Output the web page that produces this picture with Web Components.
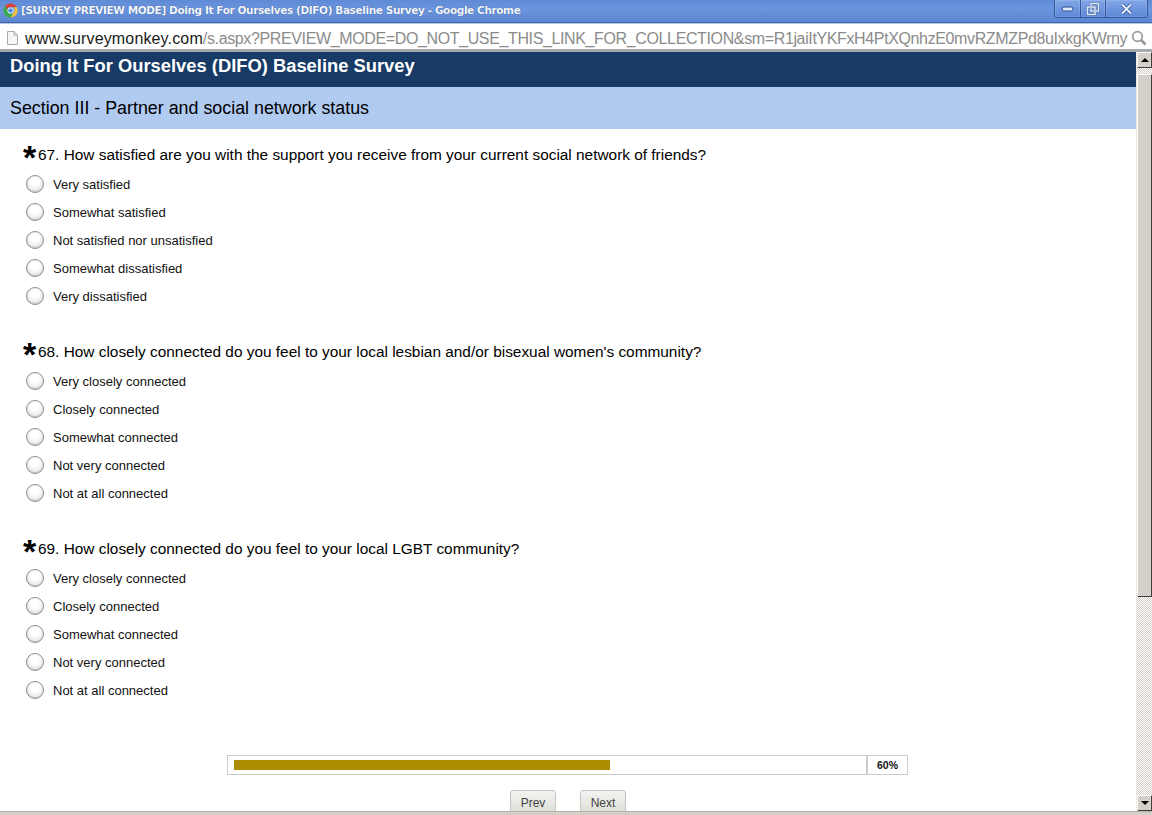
<!DOCTYPE html>
<html>
<head>
<meta charset="utf-8">
<title>DIFO Baseline Survey</title>
<style>
  html, body { margin: 0; padding: 0; height: 815px; overflow: hidden; background: #fff; }
  body { font-family: "Liberation Sans", Arial, sans-serif; }
  #app { display: flex; flex-direction: column; height: 815px; }
  #page { display: flex; height: 759px; }
  #content { flex: 1; min-width: 0; overflow: hidden; }
</style>
</head>
<body>
<div id="app">
  <title-bar>[SURVEY PREVIEW MODE] Doing It For Ourselves (DIFO) Baseline Survey - Google Chrome</title-bar>
  <address-bar host-name="www.surveymonkey.com" path="/s.aspx?PREVIEW_MODE=DO_NOT_USE_THIS_LINK_FOR_COLLECTION&amp;sm=R1jaiItYKFxH4PtXQnhzE0mvRZMZPd8uIxkgKWrny"></address-bar>
  <div id="page">
    <div id="content">
      <survey-header title="Doing It For Ourselves (DIFO) Baseline Survey" section="Section III - Partner and social network status"></survey-header>
      <survey-question number="67" text="How satisfied are you with the support you receive from your current social network of friends?">
        <survey-radio>Very satisfied</survey-radio>
        <survey-radio>Somewhat satisfied</survey-radio>
        <survey-radio>Not satisfied nor unsatisfied</survey-radio>
        <survey-radio>Somewhat dissatisfied</survey-radio>
        <survey-radio>Very dissatisfied</survey-radio>
      </survey-question>
      <survey-question number="68" text="How closely connected do you feel to your local lesbian and/or bisexual women's community?">
        <survey-radio>Very closely connected</survey-radio>
        <survey-radio>Closely connected</survey-radio>
        <survey-radio>Somewhat connected</survey-radio>
        <survey-radio>Not very connected</survey-radio>
        <survey-radio>Not at all connected</survey-radio>
      </survey-question>
      <survey-question number="69" text="How closely connected do you feel to your local LGBT community?">
        <survey-radio>Very closely connected</survey-radio>
        <survey-radio>Closely connected</survey-radio>
        <survey-radio>Somewhat connected</survey-radio>
        <survey-radio>Not very connected</survey-radio>
        <survey-radio>Not at all connected</survey-radio>
      </survey-question>
      <survey-progress percent="60"></survey-progress>
      <survey-nav>
        <survey-button>Prev</survey-button>
        <survey-button>Next</survey-button>
      </survey-nav>
    </div>
    <win-scrollbar></win-scrollbar>
  </div>
  <window-edge></window-edge>
</div>

<script>
class TitleBar extends HTMLElement {
  constructor() {
    super();
    const shadow = this.attachShadow({ mode: 'open' });
    shadow.innerHTML = `
      <style>
        :host {
          display: flex;
          align-items: center;
          height: 23px;
          box-sizing: border-box;
          padding-left: 3px;
          background: linear-gradient(#5f8ad6 0, #6b95dc 40%, #5c86d2 100%);
          border-bottom: 1px solid #3f67ad;
          color: #fff;
        }
        .logo { width: 15px; height: 15px; margin: -2px 3px 0 0; flex: none; }
        .text {
          flex: 1;
          margin-top: -2px;
          font: bold 10.5px Tahoma, "DejaVu Sans", sans-serif;
          letter-spacing: -0.39px;
          white-space: nowrap;
          color: #f4f7ff;
          text-shadow: 0 0 1px #27457f;
        }
        .controls {
          display: flex;
          align-self: flex-start;
          height: 17px;
          margin-right: 4px;
          border: 1px solid #34589c;
          border-top: 0;
          border-radius: 0 0 4px 4px;
          background: linear-gradient(#82a6e6, #5d88d6);
        }
        .controls div {
          display: flex;
          align-items: center;
          justify-content: center;
          box-shadow: inset 0 0 0 1px rgba(255,255,255,.12);
        }
        .controls div + div { border-left: 1px solid #34589c; }
        .min { width: 25px; }
        .max { width: 24px; }
        .close { width: 41px; }
      </style>
      <svg class="logo" viewBox="0 0 16 16">
        <path d="M8 0.5a7.5 7.5 0 0 1 6.6 3.9H8a3.6 3.6 0 0 0-3.4 2.4L2.3 3A7.5 7.5 0 0 1 8 0.5z" fill="#dc4437"/>
        <path d="M14.6 4.4A7.5 7.5 0 0 1 8 15.5l3.2-5.4a3.6 3.6 0 0 0-.2-5.7z" fill="#f5c33b"/>
        <path d="M2.3 3l3.3 5.6a3.6 3.6 0 0 0 5.6 1.5L8 15.5A7.5 7.5 0 0 1 2.3 3z" fill="#3da74e"/>
        <circle cx="8" cy="8" r="3.3" fill="#fff"/>
        <circle cx="8" cy="8" r="2.5" fill="#4a8be8"/>
      </svg>
      <span class="text"><slot></slot></span>
      <div class="controls">
        <div class="min"><svg width="13" height="9" viewBox="0 0 13 9"><rect x="1" y="3" width="11" height="4" rx="2" fill="#dfe8fa" stroke="#2f4f8d"/></svg></div>
        <div class="max"><svg width="14" height="14" viewBox="0 0 14 14" fill="none" stroke="#dfe8fa" stroke-width="1.6"><rect x="5" y="1.5" width="7.5" height="7.5" stroke="#2f4f8d" stroke-width="2.2"/><rect x="5" y="1.5" width="7.5" height="7.5"/><rect x="1.5" y="5" width="7.5" height="7.5" stroke="#2f4f8d" stroke-width="2.2"/><rect x="1.5" y="5" width="7.5" height="7.5"/></svg></div>
        <div class="close"><svg width="13" height="12" viewBox="0 0 13 12"><path d="M2 1.5l9 9M11 1.5l-9 9" stroke="#2f4f8d" stroke-width="3.4"/><path d="M2 1.5l9 9M11 1.5l-9 9" stroke="#e7eefc" stroke-width="2"/></svg></div>
      </div>
    `;
  }
}

class AddressBar extends HTMLElement {
  constructor() {
    super();
    const shadow = this.attachShadow({ mode: 'open' });
    shadow.innerHTML = `
      <style>
        :host {
          display: flex;
          align-items: center;
          height: 29px;
          box-sizing: border-box;
          padding: 0 5px 0 6px;
          background: #fff;
          border-top: 1px solid #b6c4dd;
          border-bottom: 3px solid #a5a8ae;
          font: 16px "Liberation Sans", Arial, sans-serif;
          white-space: nowrap;
        }
        svg { flex: none; margin-top: 2px; }
        .url { flex: 1; margin: 4px 0 0 6px; overflow: hidden; color: #8b8b8b; letter-spacing: -0.37px; }
        .url b { font-weight: normal; color: #1a1a1a; letter-spacing: 0.15px; }
      </style>
      <svg width="13" height="16" viewBox="0 0 13 16">
        <path d="M1.5 1.5h6.5l3.5 3.5v9.5h-10z" fill="#f6f6f6" stroke="#a8a8a8"/>
        <path d="M8 1.5v3.5h3.5" fill="#e4e4e4" stroke="#a8a8a8"/>
      </svg>
      <span class="url"><b></b><span></span></span>
      <svg width="16" height="16" viewBox="0 0 16 16" fill="none" stroke="#9a9a9a">
        <circle cx="6.5" cy="6.5" r="4.8" stroke-width="1.7"/>
        <path d="M10 10l4.5 4.5" stroke-width="2.6"/>
      </svg>
    `;
    shadow.querySelector('b').textContent = this.getAttribute('host-name');
    shadow.querySelector('.url span').textContent = this.getAttribute('path');
  }
}

class SurveyHeader extends HTMLElement {
  constructor() {
    super();
    const shadow = this.attachShadow({ mode: 'open' });
    shadow.innerHTML = `
      <style>
        :host { display: block; }
        .title {
          height: 35px;
          box-sizing: border-box;
          padding: 2px 10px 0;
          background: #173a66;
          color: #fff;
          font: bold 18.35px/23px "Liberation Sans", Arial, sans-serif;
        }
        .section {
          height: 42px;
          padding: 0 10px;
          background: #b0caf0;
          color: #000;
          font: 17.85px/42px "Liberation Sans", Arial, sans-serif;
        }
      </style>
      <div class="title"></div>
      <div class="section"></div>
    `;
    shadow.querySelector('.title').textContent = this.getAttribute('title');
    shadow.querySelector('.section').textContent = this.getAttribute('section');
  }
}

class SurveyQuestion extends HTMLElement {
  constructor() {
    super();
    const shadow = this.attachShadow({ mode: 'open' });
    shadow.innerHTML = `
      <style>
        :host { display: block; height: 197px; box-sizing: border-box; padding: 15px 0 0 22px; color: #000; }
        .q { display: flex; height: 24px; font: 15.4px/22px "Liberation Sans", Arial, sans-serif; }
        .star { width: 15px; padding-left: 1px; font: bold 34px/26px "Liberation Sans", Arial, sans-serif; height: 24px; overflow: visible; }
        .options { display: flex; flex-direction: column; margin-top: 2px; }
      </style>
      <div class="q"><span class="star">*</span><span class="text"></span></div>
      <div class="options"><slot></slot></div>
    `;
    shadow.querySelector('.text').textContent =
      this.getAttribute('number') + '. ' + this.getAttribute('text');
  }
}

class SurveyRadio extends HTMLElement {
  constructor() {
    super();
    const shadow = this.attachShadow({ mode: 'open' });
    shadow.innerHTML = `
      <style>
        :host { display: flex; align-items: center; height: 28px; font: 13px "Liberation Sans", Arial, sans-serif; color: #111; }
        .dot {
          width: 18px;
          height: 18px;
          box-sizing: border-box;
          margin: 0 9px 0 4px;
          border-radius: 50%;
          border: 1px solid #8f8f8f;
          background: radial-gradient(circle at 50% 35%, #fff 0 30%, #ececec 65%, #c8c8c8 100%);
          box-shadow: inset 0 -1px 1px rgba(0,0,0,.1);
        }
      </style>
      <span class="dot"></span><slot></slot>
    `;
  }
}

class SurveyProgress extends HTMLElement {
  constructor() {
    super();
    const shadow = this.attachShadow({ mode: 'open' });
    shadow.innerHTML = `
      <style>
        :host {
          display: flex;
          width: 681px;
          height: 20px;
          box-sizing: border-box;
          margin: 35px 0 0 227px;
          border: 1px solid #ccc;
          background: #fff;
        }
        .track { flex: 1; padding: 4px 6px; border-right: 2px solid #ccc; }
        .fill { height: 10px; background: #ac8f00; }
        .pct { width: 39px; text-align: center; font: bold 10.5px/19px "Liberation Sans", Arial, sans-serif; color: #111; }
      </style>
      <div class="track"><div class="fill"></div></div>
      <div class="pct"></div>
    `;
    const pct = this.getAttribute('percent');
    shadow.querySelector('.fill').style.width = pct + '%';
    shadow.querySelector('.pct').textContent = pct + '%';
  }
}

class SurveyNav extends HTMLElement {
  constructor() {
    super();
    const shadow = this.attachShadow({ mode: 'open' });
    shadow.innerHTML = `
      <style>
        :host { display: flex; justify-content: center; gap: 24px; padding: 15px 0 0; height: 30px; overflow: hidden; }
      </style>
      <slot></slot>
    `;
  }
}

class SurveyButton extends HTMLElement {
  constructor() {
    super();
    const shadow = this.attachShadow({ mode: 'open' });
    shadow.innerHTML = `
      <style>
        :host {
          display: block;
          width: 46px;
          height: 26px;
          box-sizing: border-box;
          border: 1px solid #c4c4c0;
          border-radius: 3px 3px 0 0;
          background: linear-gradient(#f3f3f0, #dcdcd6);
          text-align: center;
          font: 12px/24px "Liberation Sans", Arial, sans-serif;
          color: #444;
        }
      </style>
      <slot></slot>
    `;
  }
}

class WinScrollbar extends HTMLElement {
  constructor() {
    super();
    const shadow = this.attachShadow({ mode: 'open' });
    shadow.innerHTML = `
      <style>
        :host {
          display: flex;
          flex-direction: column;
          flex: none;
          width: 16px;
          box-sizing: border-box;
          padding-left: 1px;
          background: repeating-conic-gradient(#d4d0c8 0 25%, #fff 0 50%) 0 0 / 2px 2px;
        }
        .btn, .thumb {
          box-sizing: border-box;
          background: #d4d0c8;
          border: 1px solid;
          border-color: #fff #404040 #404040 #fff;
          flex: none;
        }
        .btn { height: 16px; display: flex; align-items: center; justify-content: center; }
        .thumb { height: 523px; margin: 6px 0 198px; }
        .up { border-bottom: 0; width: 0; height: 0; border-left: 4px solid transparent; border-right: 4px solid transparent; border-bottom: 4px solid #000; }
        .down { width: 0; height: 0; border-left: 4px solid transparent; border-right: 4px solid transparent; border-top: 4px solid #000; }
      </style>
      <div class="btn"><span class="up"></span></div>
      <div class="thumb"></div>
      <div class="btn"><span class="down"></span></div>
    `;
  }
}

class WindowEdge extends HTMLElement {
  constructor() {
    super();
    this.attachShadow({ mode: 'open' }).innerHTML = `
      <style>
        :host { display: block; height: 4px; box-sizing: border-box; background: #d4d0c8; border-top: 1px solid #b5b2aa; }
      </style>
    `;
  }
}

customElements.define('title-bar', TitleBar);
customElements.define('address-bar', AddressBar);
customElements.define('survey-header', SurveyHeader);
customElements.define('survey-question', SurveyQuestion);
customElements.define('survey-radio', SurveyRadio);
customElements.define('survey-progress', SurveyProgress);
customElements.define('survey-nav', SurveyNav);
customElements.define('survey-button', SurveyButton);
customElements.define('win-scrollbar', WinScrollbar);
customElements.define('window-edge', WindowEdge);
</script>
</body>
</html>
